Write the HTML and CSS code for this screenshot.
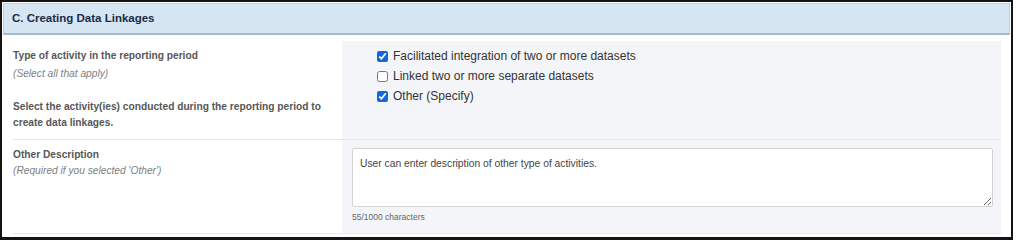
FILE: index.html
```html
<!DOCTYPE html>
<html lang="en">
<head>
<meta charset="utf-8">
<title>C. Creating Data Linkages</title>
<link rel="stylesheet" href="styles.css">
</head>
<body>
<div class="frame">
  <div class="section-header">C. Creating Data Linkages</div>
  <div class="rows">
    <div class="row row-activity">
      <div class="label-cell">
        <div class="label">Type of activity in the reporting period</div>
        <div class="hint">(Select all that apply)</div>
        <div class="desc">Select the activity(ies) conducted during the reporting period to create data linkages.</div>
      </div>
      <div class="field-cell checks">
        <label class="check"><input type="checkbox" checked><span>Facilitated integration of two or more datasets</span></label>
        <label class="check"><input type="checkbox"><span>Linked two or more separate datasets</span></label>
        <label class="check"><input type="checkbox" checked><span>Other (Specify)</span></label>
      </div>
    </div>
    <div class="row row-other">
      <div class="label-cell">
        <div class="label">Other Description</div>
        <div class="hint">(Required if you selected 'Other')</div>
      </div>
      <div class="field-cell text-field">
        <textarea class="textarea">User can enter description of other type of activities.</textarea>
        <div class="count">55/1000 characters</div>
      </div>
    </div>
  </div>
</div>
</body>
</html>
```

FILE: styles.css
```css
html, body {
  margin: 0;
  padding: 0;
  background: #ffffff;
}

body {
  font-family: "Liberation Sans", Arial, sans-serif;
}

.frame {
  box-sizing: border-box;
  width: 1013px;
  height: 240px;
  border: 2px solid #141414;
  border-bottom-width: 3px;
  background: #ffffff;
  padding: 1px 1px 0 1px;
}

.section-header {
  box-sizing: border-box;
  height: 32px;
  background: #d5e5f2;
  border: 1px solid #bcd2e4;
  border-bottom: 2px solid #a4bccf;
  color: #1b2c48;
  font-size: 11.5px;
  font-weight: bold;
  line-height: 28px;
  padding-left: 8px;
}

.rows {
  margin: 6px 9px 0 10px;
}

.row {
  display: flex;
  border-bottom: 1px solid #e4e6ea;
}

.label-cell {
  width: 329px;
  flex: none;
  color: #575757;
}

.row-activity .label-cell {
  padding: 6px 0 8px 0;
}

.row-other .label-cell {
  padding: 7px 0 0 0;
}

.label {
  font-size: 10.2px;
  font-weight: bold;
  line-height: 18px;
}

.row-other .label {
  line-height: 16px;
}

.hint {
  font-size: 10.2px;
  font-style: italic;
  color: #808080;
  line-height: 18px;
}

.row-other .hint {
  line-height: 16px;
}

.desc {
  margin-top: 16px;
  font-size: 10.2px;
  font-weight: bold;
  line-height: 16px;
}

.field-cell {
  flex: 1;
  background: #f4f5f9;
}

.checks {
  padding: 5px 0 0 35px;
  display: flex;
  flex-direction: column;
}

.check {
  display: flex;
  align-items: center;
  height: 20px;
  font-size: 12px;
  color: #333333;
}

.check input {
  width: 11px;
  height: 11px;
  margin: 0 5px 0 0;
  accent-color: #1467dc;
}

.text-field {
  padding: 8px 8px 10px 10px;
}

.textarea {
  display: block;
  box-sizing: border-box;
  width: 100%;
  height: 59px;
  margin: 0;
  border: 1px solid #d3d3d3;
  border-radius: 2px;
  background: #ffffff;
  padding: 8px 7px;
  font-family: "Liberation Sans", Arial, sans-serif;
  font-size: 10.3px;
  line-height: 14px;
  color: #444444;
  resize: vertical;
  outline: none;
}

.count {
  margin-top: 4px;
  font-size: 8.5px;
  line-height: 12px;
  color: #666666;
}
```
